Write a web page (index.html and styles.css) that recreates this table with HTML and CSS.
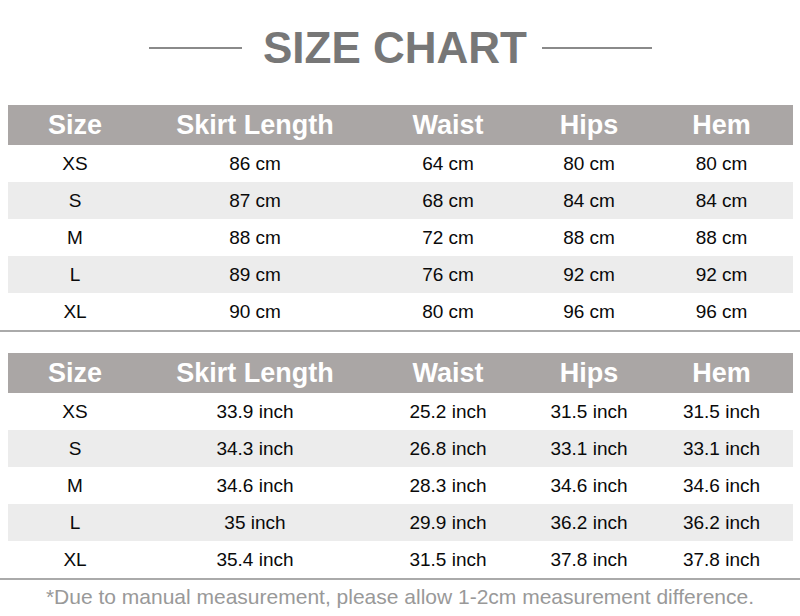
FILE: index.html
```html
<!DOCTYPE html>
<html>
<head>
<meta charset="utf-8">
<link rel="stylesheet" href="styles.css">
</head>
<body>
<div class="page">
  <header class="title-bar">
    <span class="rule rule-left"></span>
    <h1 class="title">SIZE CHART</h1>
    <span class="rule rule-right"></span>
  </header>

  <section class="chart chart-cm">
    <div class="row head"><div>Size</div><div>Skirt Length</div><div>Waist</div><div>Hips</div><div>Hem</div></div>
    <div class="row"><div>XS</div><div>86 cm</div><div>64 cm</div><div>80 cm</div><div>80 cm</div></div>
    <div class="row alt"><div>S</div><div>87 cm</div><div>68 cm</div><div>84 cm</div><div>84 cm</div></div>
    <div class="row"><div>M</div><div>88 cm</div><div>72 cm</div><div>88 cm</div><div>88 cm</div></div>
    <div class="row alt"><div>L</div><div>89 cm</div><div>76 cm</div><div>92 cm</div><div>92 cm</div></div>
    <div class="row"><div>XL</div><div>90 cm</div><div>80 cm</div><div>96 cm</div><div>96 cm</div></div>
  </section>
  <div class="divider"></div>

  <section class="chart chart-inch">
    <div class="row head"><div>Size</div><div>Skirt Length</div><div>Waist</div><div>Hips</div><div>Hem</div></div>
    <div class="row"><div>XS</div><div>33.9 inch</div><div>25.2 inch</div><div>31.5 inch</div><div>31.5 inch</div></div>
    <div class="row alt"><div>S</div><div>34.3 inch</div><div>26.8 inch</div><div>33.1 inch</div><div>33.1 inch</div></div>
    <div class="row"><div>M</div><div>34.6 inch</div><div>28.3 inch</div><div>34.6 inch</div><div>34.6 inch</div></div>
    <div class="row alt"><div>L</div><div>35 inch</div><div>29.9 inch</div><div>36.2 inch</div><div>36.2 inch</div></div>
    <div class="row"><div>XL</div><div>35.4 inch</div><div>31.5 inch</div><div>37.8 inch</div><div>37.8 inch</div></div>
  </section>
  <div class="divider"></div>

  <p class="note">*Due to manual measurement, please allow 1-2cm measurement difference.</p>
</div>
</body>
</html>
```

FILE: styles.css
```css
html, body {
  margin: 0;
  padding: 0;
  background: #ffffff;
}

.page {
  width: 800px;
  height: 616px;
  overflow: hidden;
  font-family: "Liberation Sans", Arial, sans-serif;
}

.title-bar {
  height: 105px;
  display: flex;
  align-items: center;
  padding-left: 149px;
  box-sizing: border-box;
  padding-bottom: 10px;
}

.rule {
  display: block;
  height: 2px;
  background: #8a8a8a;
}

.rule-left {
  width: 93px;
  margin-right: 21px;
}

.rule-right {
  width: 110px;
  margin-left: 15px;
}

.title {
  margin: 0;
  font-size: 44px;
  font-weight: bold;
  color: #777777;
  line-height: 1;
}

.chart {
  margin-left: 8px;
  width: 785px;
}

.row {
  display: grid;
  grid-template-columns: 134px 226px 160px 122px 143px;
  height: 37px;
  align-items: center;
  text-align: center;
  font-size: 19px;
  color: #0a0a0a;
}

.row.alt {
  background: #ececec;
}

.row.head {
  height: 40px;
  background: #aaa6a5;
  color: #ffffff;
  font-weight: bold;
  font-size: 27px;
}

.divider {
  height: 2px;
  background: #aaaaaa;
}

.chart-inch {
  margin-top: 21px;
}

.note {
  margin: 0;
  height: 36px;
  line-height: 34px;
  text-align: center;
  font-size: 21px;
  color: #999999;
}
```
